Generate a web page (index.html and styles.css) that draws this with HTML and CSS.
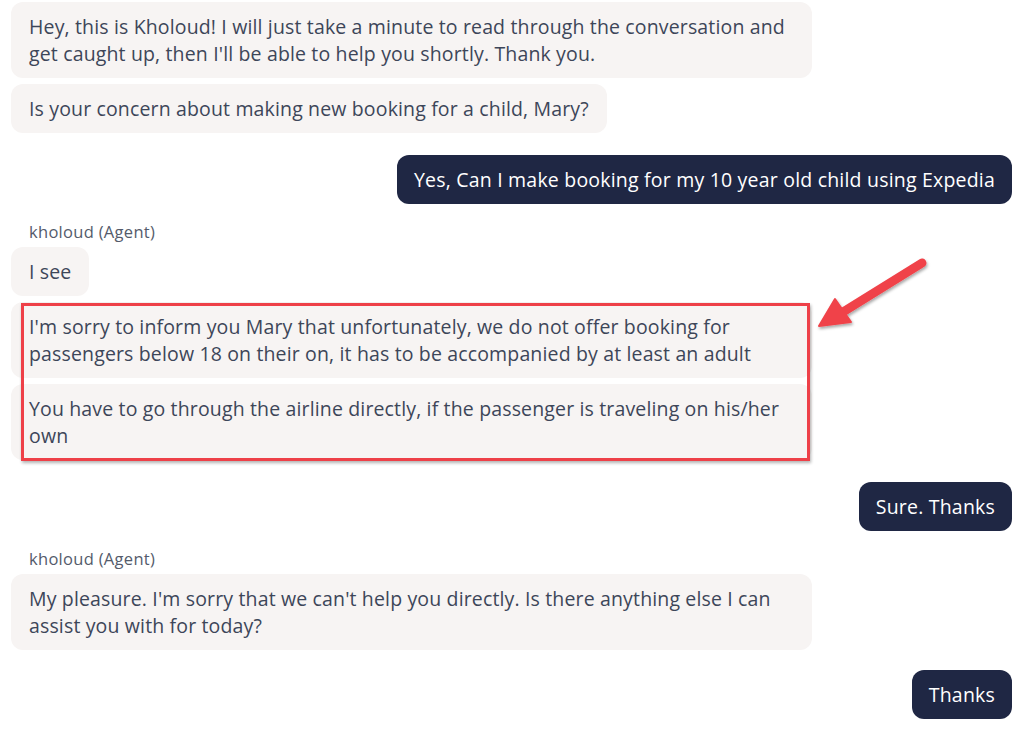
FILE: index.html
```html
<!DOCTYPE html>
<html>
<head>
<meta charset="utf-8">
<link rel="stylesheet" href="styles.css">
</head>
<body>
<div class="chat">
  <div class="group agent">
    <div class="bubble">Hey, this is Kholoud! I will just take a minute to read through the conversation and get caught up, then I'll be able to help you shortly. Thank you.</div>
    <div class="bubble">Is your concern about making new booking for a child, Mary?</div>
  </div>
  <div class="group user">
    <div class="bubble">Yes, Can I make booking for my 10 year old child using Expedia</div>
  </div>
  <div class="group agent">
    <div class="label">kholoud (Agent)</div>
    <div class="bubble">I see</div>
    <div class="highlight-wrap">
      <div class="bubble">I'm sorry to inform you Mary that unfortunately, we do not offer booking for passengers below 18 on their on, it has to be accompanied by at least an adult</div>
      <div class="bubble">You have to go through the airline directly, if the passenger is traveling on his/her own</div>
      <div class="red-box"></div>
      <svg class="arrow" width="120" height="80" viewBox="0 0 120 80">
        <defs>
          <filter id="sh" x="-20%" y="-20%" width="140%" height="140%">
            <feDropShadow dx="1" dy="2" stdDeviation="1.5" flood-color="#000" flood-opacity="0.35"/>
          </filter>
        </defs>
        <g filter="url(#sh)">
          <line x1="111" y1="10" x2="32" y2="59" stroke="#f0434a" stroke-width="9" stroke-linecap="round"/>
          <polygon points="8,73 24,46 40,69" fill="#f0434a" stroke="#f0434a" stroke-width="2" stroke-linejoin="round"/>
        </g>
      </svg>
    </div>
  </div>
  <div class="group user">
    <div class="bubble">Sure. Thanks</div>
  </div>
  <div class="group agent">
    <div class="label">kholoud (Agent)</div>
    <div class="bubble">My pleasure. I'm sorry that we can't help you directly. Is there anything else I can assist you with for today?</div>
  </div>
  <div class="group user last">
    <div class="bubble">Thanks</div>
  </div>
</div>
</body>
</html>
```
FILE: styles.css
```css
html, body {
  margin: 0;
  padding: 0;
  background: #ffffff;
}
body {
  font-family: "Open Sans", "Noto Sans", sans-serif;
  color: #3d4659;
  overflow: hidden;
}
.chat {
  width: 1024px;
  box-sizing: border-box;
  padding: 2px 12px 0 11px;
  display: flex;
  flex-direction: column;
  gap: 22px;
}
.group {
  display: flex;
  flex-direction: column;
  gap: 6px;
}
.group.agent { align-items: flex-start; }
.group.user { align-items: flex-end; }
.group.last { margin-top: -2px; }
.bubble {
  box-sizing: border-box;
  max-width: 801px;
  padding: 11px 18px;
  font-size: 19.5px;
  letter-spacing: 0.15px;
  line-height: 27px;
  border-radius: 12px;
  background: #f7f4f3;
}
.user .bubble {
  background: #1f2744;
  color: #ffffff;
  font-weight: 500;
  letter-spacing: 0.2px;
  padding: 11px 17px;
}
.label {
  font-size: 16.5px;
  letter-spacing: 0.3px;
  line-height: 20px;
  color: #545b6b;
  padding-left: 18px;
  margin-top: -4px;
  margin-bottom: -1px;
}
.highlight-wrap {
  position: relative;
  display: flex;
  flex-direction: column;
  gap: 6px;
  width: 801px;
}
.highlight-wrap .bubble {
  width: 100%;
}
.red-box {
  position: absolute;
  left: 10px;
  top: 1px;
  width: 789px;
  height: 158px;
  box-sizing: border-box;
  border: 3px solid #ee4048;
  box-shadow: 1px 2px 3px rgba(0,0,0,0.3);
  pointer-events: none;
}
.arrow {
  position: absolute;
  left: 800px;
  top: -49px;
}
```
